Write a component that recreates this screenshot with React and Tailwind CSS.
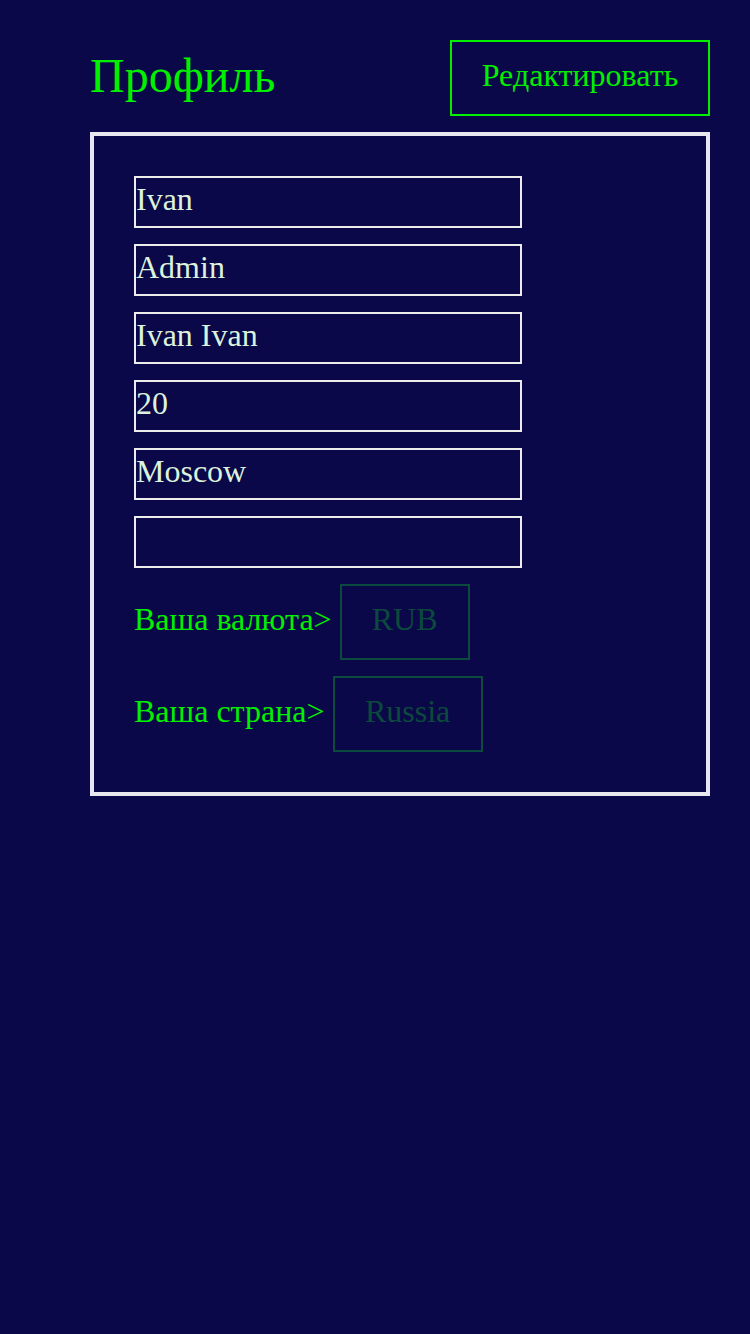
export default function App() {
  const fields = ["Ivan", "Admin", "Ivan Ivan", "20", "Moscow", ""];
  return (
    <div className="min-h-[1334px] w-[750px] bg-[#0a0848] pt-10 pl-[90px] pr-10" style={{ fontFamily: '"Liberation Serif", "Times New Roman", serif' }}>
      <div className="flex h-[76px] items-center justify-between">
        <h1 className="text-[48px] leading-none pb-[4px] text-[#00f000] font-normal">Профиль</h1>
        <button className="h-[76px] w-[260px] border-2 border-[#00f000] text-[32px] text-[#00f000] leading-none pb-[6px]">
          Редактировать
        </button>
      </div>
      <div className="mt-4 border-4 border-[#e8e6ee] p-10 flex flex-col gap-4">
        {fields.map((v, i) => (
          <div key={i} className="w-[388px] h-[52px] border-2 border-[#ececec] flex items-center pb-[6px] text-[32px] text-[#dcf2dc] leading-none">
            {v}
          </div>
        ))}
        <div className="flex items-center gap-[8px]">
          <span className="text-[32px] text-[#00f000] pb-[6px]">Ваша валюта&gt;</span>
          <div className="h-[76px] w-[130px] border-2 border-[#0b4a3c] flex items-center justify-center pb-[6px] text-[32px] leading-none text-[#0b4a3c]">RUB</div>
        </div>
        <div className="flex items-center gap-[8px]">
          <span className="text-[32px] text-[#00f000] pb-[6px]">Ваша страна&gt;</span>
          <div className="h-[76px] w-[150px] border-2 border-[#0b4a3c] flex items-center justify-center pb-[6px] text-[32px] leading-none text-[#0b4a3c]">Russia</div>
        </div>
      </div>
    </div>
  );
}
